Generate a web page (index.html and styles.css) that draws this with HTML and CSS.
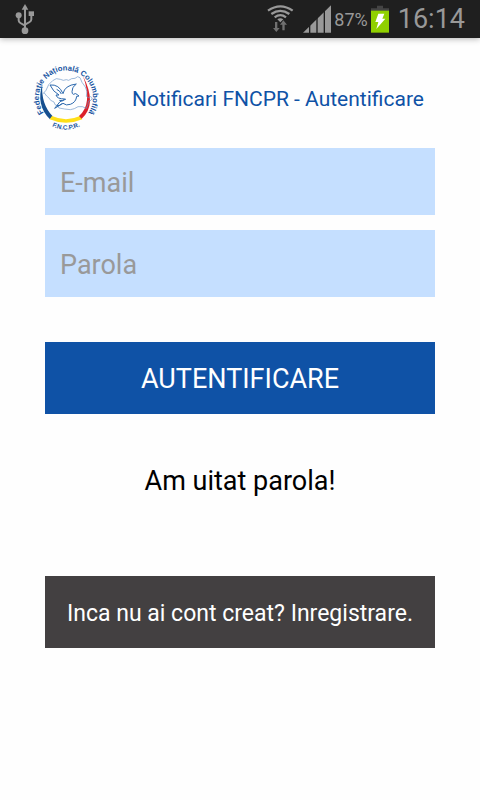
FILE: index.html
```
<!DOCTYPE html>
<html lang="ro">
<head>
  <meta charset="UTF-8">
  <meta name="viewport" content="width=device-width, initial-scale=1">
  <title>Notificari FNCPR - Autentificare</title>
  <link rel="stylesheet" href="styles.css">
</head>
<body>
  <div class="status-bar">
    <svg class="usb" width="20" height="30" viewBox="0 0 60 90" aria-hidden="true">
      <path d="M30 0l10 17H20z"/>
      <circle cx="11" cy="34" r="9"/>
      <rect x="41" y="22" width="16" height="14"/>
      <circle cx="30" cy="80" r="10"/>
      <path class="wire" d="M30 12v66M11 36v13q0 5 5 8l14 8M49 32v14q0 5-5 8l-14 8"/>
    </svg>
    <div class="status-icons">
      <svg width="28" height="28" viewBox="0 0 84 84" aria-hidden="true">
        <g class="waves">
          <path d="M3 17Q40-9 77 17"/>
          <path d="M13 27Q40 8 67 27"/>
          <path d="M23 37Q40 24 57 37"/>
        </g>
        <path class="light" d="M31 43Q40 36 49 43L40 52z"/>
        <path class="dim" d="M24 51h7v18h7L28 81 18 69h6zM46 76V59h-7l10-13 11 13h-7v17z"/>
      </svg>
      <svg width="28" height="28" viewBox="0 0 84 84" aria-hidden="true">
        <path class="light" d="M0 83L84 1v82z"/>
        <path class="bars" d="M20 60v24M42 38v46M64 16v68"/>
      </svg>
      <span class="percent">87%</span>
      <svg width="18" height="28" viewBox="0 0 54 84" aria-hidden="true">
        <path class="cap" d="M18 2h18v8h18v8H0v-8h18z"/>
        <path class="charge" d="M0 17h54v66H0z"/>
        <path class="bolt" d="M22 26h18l-6 15h9L16 72l6-21h-9z"/>
      </svg>
      <span class="clock">16:14</span>
    </div>
  </div>

  <header class="header">
    <svg class="logo" width="84" height="84" viewBox="0 0 252 252" role="img" aria-label="FNCPR">
      <defs>
        <path id="topArc" d="M69 182A81 81 0 1 1 183 182"/>
        <path id="bottomArc" d="M51 182A92 92 0 0 0 201 182"/>
      </defs>
      <!-- tricolor ring -->
      <path fill="#164f8f" d="M55 84Q35 148 78 190L86 181Q50 143 55 84z"/>
      <path fill="#ffdf18" d="M84 180Q126 199 168 180L175 190Q126 211 77 190z"/>
      <path fill="#dc2029" d="M177 60Q221 145 173 188L165 180Q207 144 177 60z"/>
      <!-- country outline -->
      <path class="outline" d="M58 112l8-9 8-17 12-12 11-6 12 2 9 3 9-2 7 2 9-5 10-1 8-5 7 3 6 14 10 14 5 14-2 14 6 4 7-3 5 4-4 7-8 2-1 10-5 12-12-5-13 0-11 6-12 3-17-2-17-3-5-7-7-3-3-8-10-5-5-7-7-6-7-9z"/>
      <!-- dove -->
      <path class="dove" d="M78 87q27-3 39 26q5-25 40-29q-14 9-13 23q0 7 4 8q7-5 12 1l5 4-7 1q-2 18-19 24q-12 5-22-3l-25 15 16-20q10-3 14-8q-23 0-26-12l9 0q-18-10-27-30z"/>
      <path class="dove" d="M98 100q10 4 14 14M106 133q10 4 20-4M99 149q8 1 14-6"/>
      <text class="ring-text"><textPath href="#topArc" startOffset="50%">Federație Națională Columbofilă</textPath></text>
      <text class="ring-text small"><textPath href="#bottomArc" startOffset="50%">F.N.C.P.R.</textPath></text>
    </svg>
    <h1>Notificari FNCPR - Autentificare</h1>
  </header>

  <main>
    <form class="login">
      <input type="email" name="email" placeholder="E-mail" aria-label="E-mail">
      <input type="password" name="parola" placeholder="Parola" aria-label="Parola">
      <button type="submit" class="btn">AUTENTIFICARE</button>
    </form>
    <a href="#" class="forgot">Am uitat parola!</a>
    <button type="button" class="btn register">Inca nu ai cont creat? Inregistrare.</button>
  </main>
</body>
</html>
```
FILE: styles.css
```
* {
  box-sizing: border-box;
}

body {
  margin: 0;
  min-height: 100vh;
  background: #fefefe;
  font-family: Roboto, 'Noto Sans', sans-serif;
}

.status-bar {
  display: flex;
  justify-content: space-between;
  align-items: center;
  height: 38px;
  padding: 0 15px;
  background: #1f1f1f;
  color: #999;
  box-shadow: 0 1px 6px rgba(0, 0, 0, 0.3);
}

.status-icons {
  display: flex;
  align-items: center;
  gap: 3px;
}

.status-icons svg:first-child {
  margin-right: 5px;
}

.usb,
.light {
  fill: #999;
}

.wire {
  fill: none;
  stroke: #999;
  stroke-width: 6;
}

.waves {
  fill: none;
  stroke: #999;
  stroke-width: 7;
}

.dim {
  fill: #707070;
}

.bars {
  stroke: #1f1f1f;
  stroke-width: 4;
}

.cap {
  fill: #444;
}

.charge {
  fill: #90d000;
}

.bolt {
  fill: #fff;
}

.percent {
  font-size: 18px;
}

.clock {
  margin-left: 6px;
  font-size: 27px;
  line-height: 38px;
}

.header {
  display: flex;
  align-items: center;
  gap: 24px;
  padding: 18px 24px 8px;
}

.logo {
  flex: none;
}

.outline {
  fill: none;
  stroke: #6d97c9;
  stroke-width: 2;
}

.dove {
  fill: none;
  stroke: #2b68ad;
  stroke-width: 3;
  stroke-linejoin: round;
}

.ring-text {
  fill: #1552a0;
  font-family: 'Liberation Sans', Arial, sans-serif;
  font-size: 23px;
  font-weight: bold;
  text-anchor: middle;
}

.small {
  font-size: 19px;
}

h1 {
  margin: 0;
  padding-top: 2px;
  color: #0f52a6;
  font-size: 21px;
  font-weight: normal;
}

main {
  display: flex;
  flex-direction: column;
  padding: 0 45px 45px;
}

.login {
  display: flex;
  flex-direction: column;
  gap: 15px;
}

input {
  width: 100%;
  height: 67px;
  padding: 2px 15px 0;
  border: none;
  border-radius: 0;
  background: #c5dfff;
  color: #222;
  font-family: inherit;
  font-size: 27px;
}

input::placeholder {
  color: #999;
}

.btn {
  width: 100%;
  min-height: 72px;
  padding: 2px 15px 0;
  border: none;
  background: #0f52a6;
  color: #fff;
  font-family: inherit;
  font-size: 27px;
  cursor: pointer;
}

.login .btn {
  margin-top: 30px;
}

.forgot {
  align-self: center;
  margin: 49px 0 77px;
  color: #000;
  font-size: 27px;
  line-height: 36px;
  text-decoration: none;
}

.register {
  background: #434041;
  font-size: 23px;
}
```
